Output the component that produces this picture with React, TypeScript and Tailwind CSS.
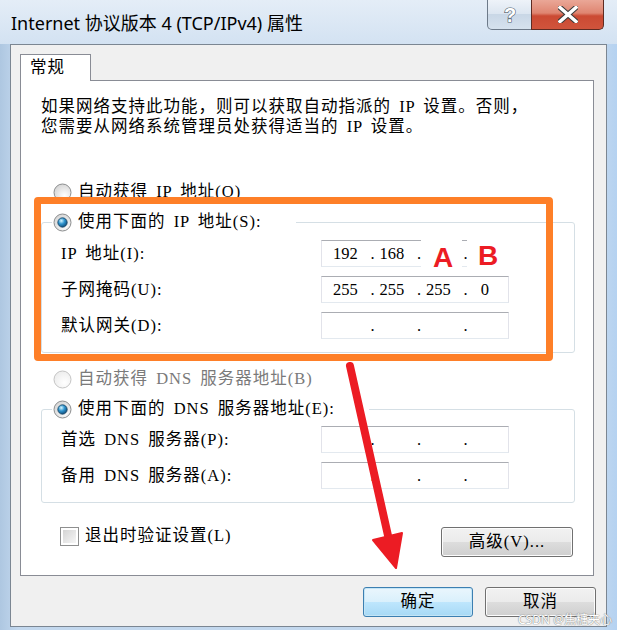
import type { ReactNode } from "react";

// Win7 "Internet 协议版本 4 (TCP/IPv4) 属性" dialog, annotated with orange box, A/B and a red arrow
const DLG = "font-['Liberation_Serif','Noto_Sans_CJK_SC',serif] text-[16.5px] tracking-[1px] [word-spacing:3px] text-black";

function Radio({ id, checked = false, disabled = false }: { id: string; checked?: boolean; disabled?: boolean }) {
  return (
    <svg width="19" height="19" viewBox="0 0 19 19" className="shrink-0">
      <defs>
        <radialGradient id={`${id}-bg`} cx="0.62" cy="0.68" r="0.75">
          <stop offset="0" stopColor="#ffffff" />
          <stop offset="1" stopColor={disabled ? "#ebebeb" : "#d2d2d2"} />
        </radialGradient>
        <radialGradient id={`${id}-dot`} cx="0.38" cy="0.32" r="0.75">
          <stop offset="0" stopColor="#d8f6ff" />
          <stop offset="0.45" stopColor="#2f95cf" />
          <stop offset="1" stopColor="#0b426e" />
        </radialGradient>
      </defs>
      <circle cx="9.5" cy="9.5" r="8.5" fill={`url(#${id}-bg)`} stroke={disabled ? "#c4c4c4" : "#8c8e8f"} />
      {checked && <circle cx="9.5" cy="9.5" r="4.7" fill={`url(#${id}-dot)`} stroke="#14405f" strokeWidth="0.8" />}
    </svg>
  );
}

function IpBox({ parts }: { parts: string[] }) {
  return (
    <div className="flex h-[27px] w-[188px] border border-[#e2e3ea] border-t-[#abadb3] border-b-[#e3e9ef] bg-white [word-spacing:0px] tracking-normal">
      {parts.map((p, i) => (
        <div key={i} className="flex flex-1 items-center">
          {i > 0 && <span className="w-[8px] text-center">.</span>}
          <span className={i > 0 ? "flex-1 pr-[8px] text-center" : "flex-1 text-center"}>{p}</span>
        </div>
      ))}
    </div>
  );
}

function Field({ label, parts }: { label: string; parts: string[] }) {
  return (
    <div className="flex h-[27px] items-center">
      <span className="w-[279px] pl-[19px] whitespace-nowrap">{label}</span>
      <IpBox parts={parts} />
    </div>
  );
}

function Group({ head, children }: { head: ReactNode; children: ReactNode }) {
  return (
    <div className="flex w-[534px] flex-col rounded-[3px] border border-[#d5dfe5] pb-[13px]">
      <div className="-mt-[11px] ml-[10px] flex h-[20px] items-center gap-[6px] self-start bg-white pl-[1px] pr-[34px] whitespace-nowrap">
        {head}
      </div>
      {children}
    </div>
  );
}

function WinButton({ children, primary = false, className = "" }: { children: ReactNode; primary?: boolean; className?: string }) {
  const skin = primary
    ? "border-[#3c7fb1] bg-[linear-gradient(#eaf6fd,#d9f0fc_50%,#bee6fd_50%,#a7d9f5)] shadow-[inset_0_0_0_1px_#c4e5f6]"
    : "border-[#707070] bg-[linear-gradient(#f2f2f2,#ebebeb_50%,#dddddd_50%,#cfcfcf)] shadow-[inset_0_0_0_1px_#fcfcfc]";
  return (
    <div className={`flex h-[30px] items-center justify-center rounded-[3px] border ${skin} ${className}`}>
      {children}
    </div>
  );
}

export default function App() {
  return (
    <div className="relative h-[630px] w-[617px] overflow-hidden bg-[linear-gradient(90deg,#aec7e1,#c3d8ee_3%,#c3d8ee_97%,#b5d2f1)]">
      {/* title bar */}
      <div className="flex h-[44px] items-start justify-between bg-[linear-gradient(#e4edf7,#d3e2f2)]">
        <div className="pl-[11px] pt-[13px] font-['Noto_Sans','Noto_Sans_CJK_SC',sans-serif] text-[18px] leading-[21px] text-black">
          Internet 协议版本 4 (TCP/IPv4) 属性
        </div>
        <div className="mr-[13px] flex">
          <div className="flex h-[30px] w-[45px] items-center justify-center rounded-bl-[5px] border border-t-0 border-[#6d7a89] bg-[linear-gradient(#eef3f9,#dbe5f0_50%,#c9d7e6_50%,#d6e2ee)]">
            <svg width="16" height="22" viewBox="0 0 16 22">
              <text x="8" y="18" textAnchor="middle" fontFamily="Liberation Sans, sans-serif" fontWeight="700" fontSize="20" fill="#ffffff" stroke="#4f5b68" strokeWidth="1.2" paintOrder="stroke">?</text>
            </svg>
          </div>
          <div className="-ml-px flex h-[30px] w-[73px] items-center justify-center rounded-br-[5px] border border-t-0 border-[#5e2b22] bg-[linear-gradient(#eaa797,#df8571_45%,#cb4a33_55%,#d0543c)]">
            <svg width="20" height="17" viewBox="0 0 20 17">
              <path d="M2 1.5 L18 15.5 M18 1.5 L2 15.5" stroke="#3a3a3a" strokeWidth="5.5" strokeLinecap="square" />
              <path d="M2 1.5 L18 15.5 M18 1.5 L2 15.5" stroke="#ffffff" strokeWidth="3.5" strokeLinecap="square" />
            </svg>
          </div>
        </div>
      </div>

      {/* client area */}
      <div className={`ml-[10px] flex h-[583px] w-[597px] flex-col border border-[#7b8692] bg-[#f0f0f0] ${DLG}`}>
        <div className="pl-[9px] pt-[9px]">
          <div className="relative z-10 flex h-[27px] w-[71px] items-center border border-b-0 border-[#898c95] bg-white pl-[9px]">常规</div>
          <div className="-mt-px flex h-[496px] w-[574px] flex-col border border-[#898c95] bg-white pl-[20px] pr-[17px] pt-[16px] leading-[20px]">
            <p className="whitespace-nowrap">
              如果网络支持此功能，则可以获取自动指派的 IP 设置。否则，
              <br />
              您需要从网络系统管理员处获得适当的 IP 设置。
            </p>

            <div className="mt-[45px] ml-[12px] flex h-[20px] items-center gap-[6px]">
              <Radio id="r1" />
              <span>自动获得 IP 地址(O)</span>
            </div>

            <div className="mt-[20px]">
              <Group head={<><Radio id="r2" checked /><span>使用下面的 IP 地址(S):</span></>}>
                <div className="mt-[8px] flex flex-col gap-[9px]">
                  <Field label="IP 地址(I):" parts={["192", "168", "", ""]} />
                  <Field label="子网掩码(U):" parts={["255", "255", "255", "0"]} />
                  <Field label="默认网关(D):" parts={["", "", "", ""]} />
                </div>
              </Group>
            </div>

            <div className="mt-[16px] ml-[12px] flex h-[20px] items-center gap-[6px] text-[#7a7a7a]">
              <Radio id="r3" disabled />
              <span>自动获得 DNS 服务器地址(B)</span>
            </div>

            <div className="mt-[20px]">
              <Group head={<><Radio id="r4" checked /><span>使用下面的 DNS 服务器地址(E):</span></>}>
                <div className="mt-[7px] flex flex-col gap-[9px]">
                  <Field label="首选 DNS 服务器(P):" parts={["", "", "", ""]} />
                  <Field label="备用 DNS 服务器(A):" parts={["", "", "", ""]} />
                </div>
              </Group>
            </div>

            <div className="mt-[23px] flex w-[534px] items-start justify-between">
              <div className="ml-[19px] flex h-[20px] items-center gap-[6px]">
                <div className="h-[19px] w-[19px] border border-[#8e8f8f] bg-white p-[2px]">
                  <div className="h-full w-full bg-[linear-gradient(135deg,#d4d4d4,#f6f6f6)]" />
                </div>
                <span>退出时验证设置(L)</span>
              </div>
              <WinButton className="mr-[2px] mt-[1px] w-[132px]">高级(V)...</WinButton>
            </div>
          </div>
        </div>

        <div className="mt-[11px] flex justify-end gap-[12px] pr-[10px]">
          <WinButton primary className="w-[110px]">确定</WinButton>
          <WinButton className="w-[111px]">取消</WinButton>
        </div>
      </div>

      {/* annotations */}
      <div className="absolute left-[34px] top-[197px] h-[164px] w-[519px] rounded-[4px] border-[7px] border-[#fe7f28]" />
      <div className="absolute left-[421px] top-[239px] flex h-[37px] w-[41px] items-center justify-center bg-white pl-[3px] font-['Liberation_Sans',sans-serif] text-[28px] font-bold text-[#ec1c24]">A</div>
      <div className="absolute left-[467px] top-[238px] flex h-[35px] w-[44px] items-center justify-center bg-white pr-[2px] font-['Liberation_Sans',sans-serif] text-[28px] font-bold text-[#ec1c24]">B</div>
      <svg className="pointer-events-none absolute left-0 top-0" width="617" height="630" viewBox="0 0 617 630">
        <line x1="350" y1="366" x2="389" y2="540" stroke="#ec1c24" strokeWidth="8" strokeLinecap="round" />
        <polygon points="373,540 402,533 396,568" fill="#ec1c24" stroke="#ec1c24" strokeWidth="2" strokeLinejoin="round" />
      </svg>
      <div className="absolute bottom-[3px] right-[5px] font-['Noto_Sans','Noto_Sans_CJK_SC',sans-serif] text-[12px] leading-[14px] text-white [text-shadow:0_0_1px_#7d7d7d,0_0_1px_#7d7d7d]">
        CSDN @焦糖夹心
      </div>
    </div>
  );
}
